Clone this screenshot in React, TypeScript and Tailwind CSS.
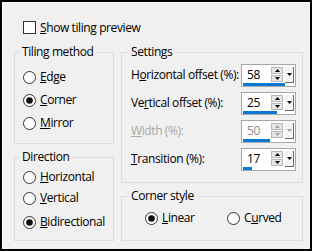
import React from "react";

const font = { fontFamily: '"Open Sans", "Noto Sans", sans-serif' };

function Radio({ checked }: { checked?: boolean }) {
  return (
    <svg width="13" height="13" viewBox="0 0 13 13" className="shrink-0">
      <circle cx="6.5" cy="6.5" r="6" fill="#fff" stroke="#333" strokeWidth="1" />
      {checked && <circle cx="6.5" cy="6.5" r="3.3" fill="#111" />}
    </svg>
  );
}

function RadioRow({ label, u, rest, checked, className = "" }: { label?: string; u: string; rest: string; checked?: boolean; className?: string }) {
  return (
    <div className={"flex items-center h-[16px] gap-[4px] " + className}>
      <Radio checked={checked} />
      <span className="leading-[16px] whitespace-nowrap">
        {label}
        <u>{u}</u>
        {rest}
      </span>
    </div>
  );
}

function Spin({ value, bar, disabled }: { value: string; bar: number; disabled?: boolean }) {
  const arrow = disabled ? "#a0a0a0" : "#000";
  return (
    <div className="w-[55px] h-[23px] shrink-0 border border-[#a8a8a8] bg-white pt-[1px] flex flex-col">
      <div className="flex h-[16px]">
        <span className={"flex-1 pl-[5px] leading-[18px] " + (disabled ? "text-[#8c8c8c]" : "text-black")}>{value}</span>
        <div className="w-[12px] flex flex-col gap-[1px] mt-[1px]">
          <div className="h-[7px] border border-[#b8b8b8] bg-[#e6e6e6] flex items-center justify-center">
            <svg width="5" height="3" viewBox="0 0 5 3"><path d="M0 3 L2.5 0 L5 3 Z" fill={arrow} /></svg>
          </div>
          <div className="h-[7px] border border-[#b8b8b8] bg-[#e6e6e6] flex items-center justify-center">
            <svg width="5" height="3" viewBox="0 0 5 3"><path d="M0 0 L5 0 L2.5 3 Z" fill={arrow} /></svg>
          </div>
        </div>
        <div className="w-[9px] ml-[2px] mr-[1px] mt-[1px] h-[16px] bg-[#f4f4f4] border-r border-b border-[#6a6a6a] flex items-center justify-center">
          <svg width="5" height="3" viewBox="0 0 5 3"><path d="M0 0 L5 0 L2.5 3 Z" fill={arrow} /></svg>
        </div>
      </div>
      <div className="mt-[1px] ml-[1px] h-[3px] bg-[#0a78d6]" style={{ width: bar }} />
    </div>
  );
}

function Field({ label, children, disabled }: { label: React.ReactNode; children: React.ReactNode; disabled?: boolean }) {
  return (
    <div className="flex items-center justify-between h-[23px]">
      <span className={"leading-[16px] mb-[2px] whitespace-nowrap " + (disabled ? "text-[#a8a8a8]" : "")}>{label}</span>
      {children}
    </div>
  );
}

export default function App() {
  return (
    <div
      className="w-[312px] h-[251px] border-2 border-black bg-[#f0f0f0] shadow-[inset_1px_1px_0_#ffffff] text-[12px] tracking-[-0.4px] text-black pt-[18px] pl-[12px] flex flex-col"
      style={font}
    >
      <div className="flex items-center h-[15px] ml-[9px] gap-[4px]">
        <div className="w-[13px] h-[13px] border border-[#333] bg-white shrink-0" />
        <span className="leading-[16px]">
          <u>S</u>how tiling preview
        </span>
      </div>

      <div className="flex mt-[9px] gap-[7px]">
        <div className="flex flex-col w-[100px]">
          <fieldset className="h-[100px] border border-[#dcdcdc]">
            <legend className="ml-[4px] px-[3px] leading-[16px]">Tiling method</legend>
            <div className="pl-[8px]">
              <RadioRow className="mt-[9px]" u="E" rest="dge" />
              <RadioRow className="mt-[7px]" u="C" rest="orner" checked />
              <RadioRow className="mt-[7px]" u="M" rest="irror" />
            </div>
          </fieldset>
          <fieldset className="h-[92px] mt-[5px] border border-[#dcdcdc]">
            <legend className="ml-[4px] px-[3px] leading-[16px]">Direction</legend>
            <div className="pl-[8px]">
              <RadioRow className="mt-[4px]" u="H" rest="orizontal" />
              <RadioRow className="mt-[5px]" u="V" rest="ertical" />
              <RadioRow className="mt-[8px]" u="B" rest="idirectional" checked />
            </div>
          </fieldset>
        </div>

        <div className="flex flex-col w-[182px]">
          <fieldset className="h-[139px] border border-[#dcdcdc]">
            <legend className="ml-[6px] px-[3px] leading-[16px]">Settings</legend>
            <div className="flex flex-col gap-[5px] mt-[4px] pl-[9px] pr-[6px]">
              <Field label={<>H<u>o</u>rizontal offset (%):</>}>
                <Spin value="58" bar={42} />
              </Field>
              <Field label={<>Ve<u>r</u>tical offset (%):</>}>
                <Spin value="25" bar={34} />
              </Field>
              <Field label={<><u>W</u>idth (%):</>} disabled>
                <Spin value="50" bar={27} disabled />
              </Field>
              <Field label={<><u>T</u>ransition (%):</>}>
                <Spin value="17" bar={9} />
              </Field>
            </div>
          </fieldset>
          <fieldset className="h-[53px] mt-[5px] border border-[#dcdcdc]">
            <legend className="ml-[6px] px-[3px] leading-[16px]">Corner style</legend>
            <div className="flex items-center mt-[6px] pl-[23px]">
              <RadioRow className="w-[82px]" u="L" rest="inear" checked />
              <RadioRow label="C" u="u" rest="rved" />
            </div>
          </fieldset>
        </div>
      </div>
    </div>
  );
}
